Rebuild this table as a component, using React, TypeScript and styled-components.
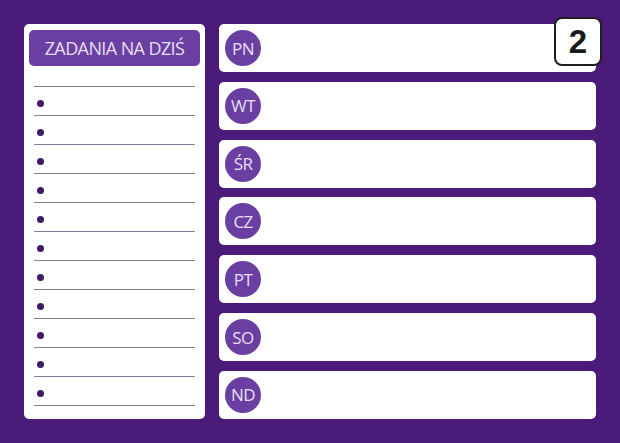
import React from "react";
import styled, { createGlobalStyle } from "styled-components";

const Global = createGlobalStyle`
  html, body { margin: 0; padding: 0; }
  body { background: #4a1b78; font-family: "Open Sans", "DejaVu Sans", sans-serif; }
`;

const Page = styled.div`
  width: 620px;
  height: 443px;
  box-sizing: border-box;
  padding: 24px;
  display: flex;
  gap: 14px;
  background: #4a1b78;
`;

const TasksPanel = styled.div`
  width: 181px;
  flex: none;
  background: #fff;
  border-radius: 5px;
  box-sizing: border-box;
  padding: 6px 5px 0;
  display: flex;
  flex-direction: column;
`;

const TitleBox = styled.div`
  height: 36px;
  background: #6a3fa2;
  border-radius: 5px;
  display: flex;
  align-items: center;
  justify-content: center;
  color: #e8dff3;
  font-size: 18px;
  letter-spacing: -0.6px;
  font-weight: 400;
`;

const TaskList = styled.div`
  margin: 20px 5px 0;
  border-top: 1px solid #85799c;
  display: flex;
  flex-direction: column;
`;

const TaskRow = styled.div`
  border-bottom: 1px solid #85799c;
  display: flex;
  align-items: flex-end;
  padding: 0 0 8px 3px;
  height: 20px;
`;

const Bullet = styled.span`
  width: 7px;
  height: 7px;
  border-radius: 50%;
  background: #3e1a68;
`;

const DaysColumn = styled.div`
  flex: 1;
  position: relative;
  display: flex;
  flex-direction: column;
  justify-content: space-between;
`;

const DayCard = styled.div`
  height: 48px;
  background: #fff;
  border-radius: 5px;
  display: flex;
  align-items: center;
  padding-left: 6px;
`;

const DayBadge = styled.div`
  width: 36px;
  height: 36px;
  border-radius: 50%;
  background: #6a3fa2;
  color: #e8dff3;
  display: flex;
  align-items: center;
  justify-content: center;
  font-size: 17px;
  letter-spacing: -0.6px;
`;

const NumberBadge = styled.div`
  position: absolute;
  top: -7px;
  right: -6px;
  width: 48px;
  height: 49px;
  box-sizing: border-box;
  border: 2px solid #1e1e1e;
  border-radius: 8px;
  background: #fff;
  display: flex;
  align-items: center;
  justify-content: center;
  font-family: "Liberation Sans", Arial, sans-serif;
  font-weight: 700;
  font-size: 33px;
  color: #1a1a1a;
`;

const days = ["PN", "WT", "ŚR", "CZ", "PT", "SO", "ND"];

export default function App() {
  return (
    <>
      <Global />
      <Page>
        <TasksPanel>
          <TitleBox>ZADANIA NA DZIŚ</TitleBox>
          <TaskList>
            {Array.from({ length: 11 }).map((_, i) => (
              <TaskRow key={i}>
                <Bullet />
              </TaskRow>
            ))}
          </TaskList>
        </TasksPanel>
        <DaysColumn>
          {days.map((d) => (
            <DayCard key={d}>
              <DayBadge>{d}</DayBadge>
            </DayCard>
          ))}
          <NumberBadge>2</NumberBadge>
        </DaysColumn>
      </Page>
    </>
  );
}
